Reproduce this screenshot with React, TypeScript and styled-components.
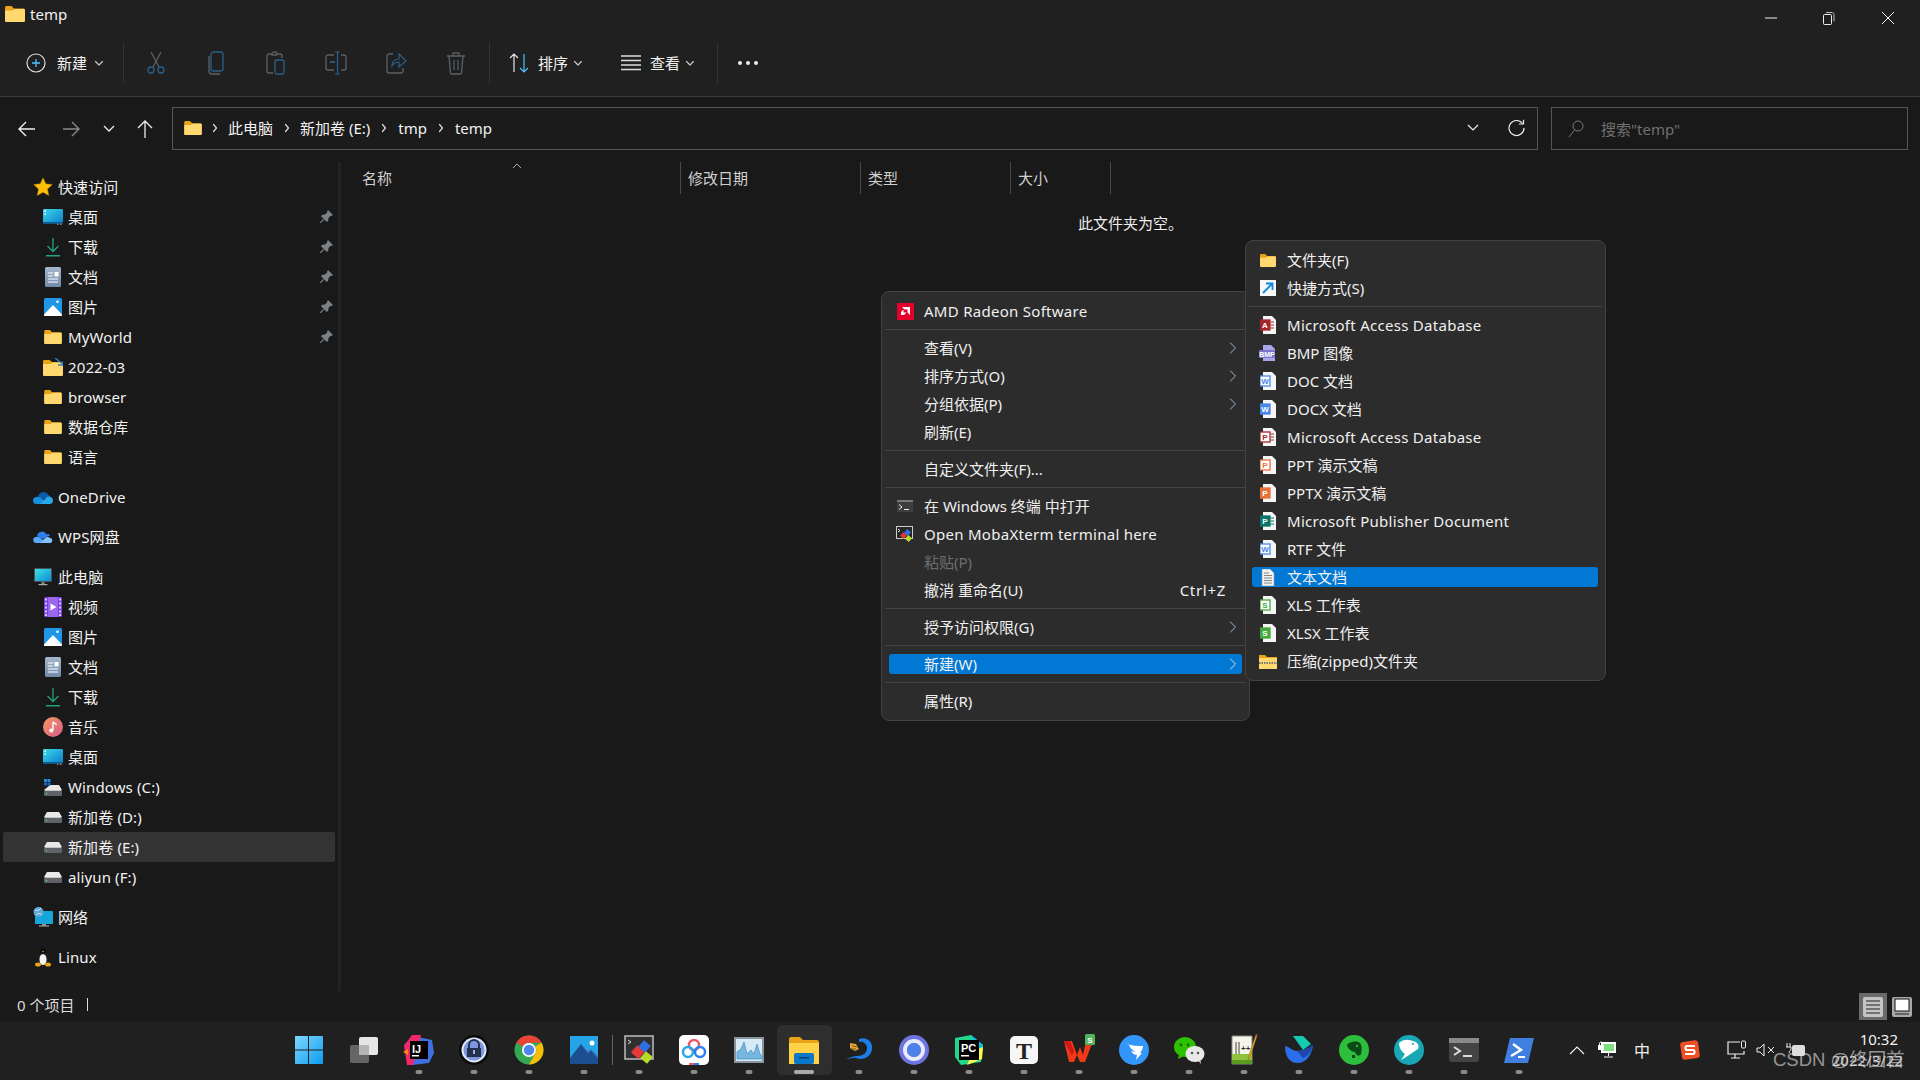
import React from 'react';
import styled, { createGlobalStyle } from 'styled-components';

const Global = createGlobalStyle`
  html, body { margin: 0; padding: 0; background: #191919; overflow: hidden; }
  body { font-family: "Noto Sans", "Noto Sans CJK SC", sans-serif; font-size: 15px; color: #f2f2f2; }
  * { box-sizing: border-box; }
`;

const Page = styled.div`position: relative; width: 1920px; height: 1080px; display: flex; flex-direction: column; overflow: hidden;`;
const TopBar = styled.div`background: #202020; height: 97px; border-bottom: 1px solid #3b3b3b; flex: none;`;
const TitleRow = styled.div`height: 30px; display: flex; align-items: center; padding: 0 3px 2px 5px; gap: 5px; line-height: 20px;`;
const WindowButtons = styled.div`margin-left: auto; display: flex; margin-top: 7px;`;
const WindowButton = styled.div`width: 58.5px; height: 30px; display: flex; align-items: center; justify-content: center;`;
const Toolbar = styled.div`height: 66px; display: flex; align-items: center;`;
const ToolSep = styled.div`width: 1px; height: 40px; background: #343434; flex: none;`;
const ToolText = styled.div<{ $pad: number; $gap: number; $w: number }>`
  display: flex; align-items: center; flex: none; width: ${p => p.$w}px; padding-left: ${p => p.$pad}px; gap: ${p => p.$gap}px; height: 40px;
`;
const ToolLabel = styled.span`width: 31px; white-space: nowrap; line-height: 20px;`;
const ToolIconSlot = styled.div`width: 60px; height: 40px; display: flex; align-items: center; justify-content: center; flex: none;`;
const DisabledGroup = styled.div`display: flex; padding: 0 3px 0 2px;`;
const ToolChevron = styled.div`margin-left: -5px; display: flex;`;

const AddressRow = styled.div`height: 65px; padding: 10px 12px 0 5px; display: flex; flex: none; background: #191919;`;
const NavButton = styled.div<{ $w: number }>`width: ${p => p.$w}px; height: 43px; display: flex; align-items: center; justify-content: center; flex: none;`;
const AddressBox = styled.div`
  margin-left: 7px; width: 1366px; height: 43px; border: 1px solid #565656; background: #1b1b1b; display: flex; align-items: center; padding: 0 0 2px 11px; flex: none;
`;
const Crumb = styled.span<{ $ml: number }>`margin-left: ${p => p.$ml}px; white-space: nowrap; line-height: 20px;`;
const CrumbSep = styled.div<{ $ml: number }>`margin-left: ${p => p.$ml}px; display: flex;`;
const AddressEnd = styled.div`margin-left: auto; display: flex; align-items: center; gap: 29px; padding-right: 12px;`;
const SearchBox = styled.div`
  margin-left: 13px; width: 357px; height: 43px; border: 1px solid #565656; display: flex; align-items: center; padding-left: 16px; gap: 17px; color: #6f6f6f; flex: none;
`;

const Body = styled.div`flex: 1; display: flex; min-height: 0;`;
const Sidebar = styled.div`width: 341px; flex: none; padding: 10px 3px 0 3px; border-right: 3px solid #222; display: flex; flex-direction: column; gap: 10px;`;
const NavGroup = styled.div`display: flex; flex-direction: column;`;
const NavRow = styled.div<{ $child?: boolean; $selected?: boolean }>`
  height: 30px; display: flex; align-items: center; border-radius: 2px; position: relative; padding-left: ${p => (p.$child ? 40 : 30)}px; gap: 5px; line-height: 20px; white-space: nowrap; letter-spacing: .12px;
  background: ${p => (p.$selected ? '#333' : 'transparent')};
`;
const NavIcon = styled.div`width: 20px; height: 20px; display: flex; align-items: center; justify-content: center; flex: none;`;
const PinSlot = styled.div`position: absolute; right: 2px; top: 8px; display: flex;`;

const Main = styled.div`flex: 1; display: flex; flex-direction: column;`;
const HeaderRow = styled.div`display: flex; height: 32px; flex: none;`;
const HeaderCell = styled.div<{ $w: number; $pad: number }>`
  width: ${p => p.$w}px; padding: 0 0 2px ${p => p.$pad}px; border-right: 1px solid #4a4a4a; position: relative; display: flex; align-items: center; color: #d0d0d0; white-space: nowrap;
`;
const SortCaret = styled.div`position: absolute; left: 171px; top: 0; display: flex;`;
const EmptyNote = styled.div`margin-top: 18px; text-align: center; line-height: 22px; color: #eee;`;

const StatusBar = styled.div`height: 31px; flex: none; display: flex; align-items: center; padding: 0 8px 0 17px; background: #1a1a1a; color: #dcdcdc;`;
const StatusInfo = styled.div`display: flex; align-items: center; margin-top: -4px;`;
const StatusCaret = styled.div`width: 1px; height: 13px; margin-left: 13px; background: #ddd;`;
const ViewToggles = styled.div`margin-left: auto; display: flex; align-items: center; gap: 4px;`;
const ViewToggle = styled.div<{ $active?: boolean }>`
  width: ${p => (p.$active ? 28 : 21)}px; height: ${p => (p.$active ? 27 : 21)}px; background: ${p => (p.$active ? '#6a6a6a' : 'transparent')}; display: flex; align-items: center; justify-content: center;
`;

const Taskbar = styled.div`height: 58px; flex: none; background: #202020; display: flex; align-items: center; padding: 0 0 2px 281.5px; position: relative;`;
const TaskItem = styled.div<{ $dot?: boolean; $active?: boolean }>`
  width: 55px; height: 50px; position: relative; display: flex; align-items: center; justify-content: center; flex: none; border-radius: 5px;
  background: ${p => (p.$active ? '#2e2e2e' : 'transparent')};
  &::after {
    content: ''; display: ${p => (p.$dot ? 'block' : 'none')}; position: absolute; left: 50%; bottom: 1px; height: 4px; border-radius: 2px;
    width: ${p => (p.$active ? 20 : 7)}px; transform: translateX(-50%); background: ${p => (p.$active ? '#aaa' : '#8a8a8a')};
  }
`;
const TaskDivider = styled.div`width: 1px; height: 30px; margin-right: -1px; background: #666; flex: none;`;
const TraySpacer = styled.div`width: 15.5px; flex: none;`;
const TrayItem = styled.div<{ $w: number }>`width: ${p => p.$w}px; flex: none; display: flex; align-items: center; justify-content: center; color: #f0f0f0; font-size: 16px;`;
const Clock = styled.div`flex: 1; display: flex; flex-direction: column; align-items: flex-end; padding-right: 17px; line-height: 20px; font-size: 15px; margin-top: -2px;`;
const ClockTime = styled.span`margin-right: 5px; margin-bottom: 1px;`;
const ClockDate = styled.span`color: #c8c8c8;`;
const Watermark = styled.div`
  position: absolute; left: 1773px; top: 1047px; font-family: "Liberation Sans", "Noto Sans CJK SC", sans-serif; font-size: 18.5px; line-height: 26px; color: rgba(225,225,225,.62); white-space: nowrap;
`;

const Menu = styled.div<{ $x: number; $y: number; $w: number; $pt: number; $pb: number; $pl: number; $z: number }>`
  position: absolute; left: ${p => p.$x}px; top: ${p => p.$y}px; width: ${p => p.$w}px; z-index: ${p => p.$z};
  display: flex; flex-direction: column;
  padding: ${p => p.$pt}px 7px ${p => p.$pb}px ${p => p.$pl}px;
  background: #2c2c2c; border: 1px solid #424242; border-radius: 8px;
`;
const MenuRow = styled.div<{ $active?: boolean; $disabled?: boolean }>`
  height: 20px; margin: 4px 0; display: flex; align-items: center; padding-left: 7px; line-height: 20px; white-space: nowrap; border-radius: 3px; flex: none;
  background: ${p => (p.$active ? '#0078d4' : 'transparent')};
  color: ${p => (p.$disabled ? '#6d6d6d' : '#f0f0f0')};
`;
const MenuIcon = styled.div`width: 18px; height: 18px; flex: none; margin-right: 10px; display: flex; align-items: center; justify-content: center;`;
const MenuLatin = styled.span`letter-spacing: .28px;`;
const MenuShortcut = styled.span`margin-left: auto; padding-right: 16px; letter-spacing: .7px;`;
const MenuArrow = styled.div`margin-left: auto; padding-right: 5px; display: flex;`;
const MenuSep = styled.div`height: 1px; margin: 4px -4px; background: #454545; flex: none;`;

const S = { fill: 'none', strokeLinecap: 'round' as const, strokeLinejoin: 'round' as const };

const Chevron = ({ size = 10, color = '#cfcfcf' }: { size?: number; color?: string }) => (
  <svg width={size} height={size} viewBox="0 0 10 10"><path d="M1.5 3.5 5 7l3.5-3.5" stroke={color} strokeWidth="1.1" {...S} /></svg>
);
const RightArrow = ({ color = '#dcdcdc' }: { color?: string }) => (
  <svg width="8" height="12" viewBox="0 0 8 12"><path d="M1.5 1 6.5 6l-5 5" stroke={color} strokeWidth="1" {...S} /></svg>
);
const CrumbArrow = () => <svg width="6" height="10" viewBox="0 0 6 10"><path d="M1.5 1.5 4.5 5l-3 3.5" stroke="#dedede" strokeWidth="1.2" {...S} /></svg>;

const Folder = ({ w = 20, h = 16 }: { w?: number; h?: number }) => (
  <svg width={w} height={h} viewBox="0 0 20 16">
    <path d="M0 1.5C0 .7.7 0 1.500 0h5L9 2.500h9.500c.8 0 1.500.7 1.500 1.500v10.500c0 .8-.7 1.500-1.500 1.500h-17C.7 16 0 15.300 0 14.500z" fill="#e9a317" />
    <path d="M0 4.500h7.500L9.500 3h9c.8 0 1.500.7 1.500 1.500v10c0 .8-.7 1.500-1.500 1.500h-17C.7 16 0 15.300 0 14.500z" fill="#ffd970" />
  </svg>
);
const FolderLink = () => (
  <svg width="20" height="18" viewBox="0 0 20 18">
    <path d="M0 3.500C0 2.700.7 2 1.500 2h5L9 4h9c1 0 2 1 2 2v10.500c0 .8-.7 1.500-1.500 1.500h-17C.7 18 0 17.300 0 16.500z" fill="#e9a317" />
    <path d="M0 6h7.500l2-1.500h9c.8 0 1.500.7 1.500 1.500v10.500c0 .8-.7 1.500-1.500 1.500h-17C.7 18 0 17.300 0 16.500z" fill="#ffd970" />
    <path d="M12 0l7 5.500" stroke="#2a80c4" strokeWidth="1.500" /><path d="M15 7h5V3" stroke="#2a80c4" strokeWidth="1.500" fill="none" />
  </svg>
);
const Star = () => <svg width="20" height="20" viewBox="0 0 20 20"><path d="M10 .8l2.800 6 6.500.8-4.800 4.500 1.300 6.500L10 15.300l-5.800 3.300 1.300-6.500L.7 7.600l6.500-.8z" fill="#ffc107" stroke="#b57e00" strokeWidth=".5" /></svg>;
const DesktopIco = () => (
  <svg width="20" height="16" viewBox="0 0 20 16">
    <defs><linearGradient id="dk" x1="0" y1="0" x2="1" y2="1"><stop offset="0" stopColor="#3fd6ee" /><stop offset="1" stopColor="#0a7fc7" /></linearGradient></defs>
    <rect width="20" height="14.500" rx="1" fill="url(#dk)" /><rect x="1.500" y="1.500" width="1.500" height="1.500" fill="#fff" /><rect x="1.500" y="4.500" width="1.500" height="1.500" fill="#dff" />
    <rect y="13" width="20" height="1.500" fill="#0b5a90" /><rect x="14" y="14.500" width="1.500" height="1.500" fill="#888" /><rect x="17" y="14.500" width="1.500" height="1.500" fill="#888" />
  </svg>
);
const DownloadIco = () => <svg width="16" height="19" viewBox="0 0 16 19"><path d="M8 0v13M2.500 8 8 13.500 13.500 8" stroke="#25a07f" strokeWidth="1.300" fill="none" /><rect x="1" y="17" width="14" height="1.500" fill="#25a07f" /></svg>;
const DocsIco = () => (
  <svg width="16" height="20" viewBox="0 0 16 20">
    <defs><linearGradient id="dc" x1="0" y1="0" x2="0" y2="1"><stop offset="0" stopColor="#a5b8cf" /><stop offset="1" stopColor="#6f8aa9" /></linearGradient></defs>
    <rect width="16" height="20" rx="1.500" fill="url(#dc)" /><path d="M3 6h5M3 9h5M3 12h10M3 15h10" stroke="#fff" strokeWidth="1.100" /><rect x="9.500" y="5" width="4" height="4.500" fill="#fff" />
  </svg>
);
const PictureIco = () => (
  <svg width="18" height="18" viewBox="0 0 18 18">
    <rect width="18" height="18" rx="1.500" fill="#1f96e8" /><path d="M0 16.500 9 7l9 9.500V18H0z" fill="#fff" /><circle cx="13.500" cy="3.800" r="1.300" fill="#fff" />
  </svg>
);
const OneDrive = () => (
  <svg width="20" height="14" viewBox="0 0 20 14">
    <path d="M5 7a5.500 5.500 0 0 1 10-2.500 4 4 0 0 1 2.500 3L9 9.500z" fill="#0a5cb0" /><path d="M3.500 14a3.500 3.500 0 0 1 0-7H5c1 0 2 .4 3 1l4 3-3 3z" fill="#1490df" /><path d="M7 14l7-7c2-1.500 6 0 6 3.500 0 2-1.500 3.500-3 3.500z" fill="#28a8ea" />
  </svg>
);
const WpsCloud = () => (
  <svg width="20" height="14" viewBox="0 0 20 14">
    <path d="M4 6a5 5 0 0 1 9.500-1.500C15 3.500 16.500 4 17 5.500L9 9z" fill="#2f7df0" /><path d="M3.500 13a3 3 0 0 1-.5-6c1.500-.5 3 0 4 1l3 2-2 3z" fill="#58a8ff" /><path d="M7 13l5-5c2-1.500 4-1 5 0 3 0 3 5 0 5z" fill="#7fc3ff" />
  </svg>
);
const PcIco = () => (
  <svg width="18" height="18" viewBox="0 0 18 18">
    <defs><linearGradient id="pc" x1="0" y1="0" x2="1" y2="1"><stop offset="0" stopColor="#3fe0e0" /><stop offset="1" stopColor="#0b8ed8" /></linearGradient></defs>
    <rect width="18" height="14" rx="1" fill="#4a4f55" /><rect x="1" y="1" width="16" height="12" fill="url(#pc)" /><rect x="7.500" y="14" width="3" height="2" fill="#888" /><rect x="4.500" y="16" width="9" height="1.200" fill="#aaa" />
  </svg>
);
const VideoIco = () => (
  <svg width="18" height="20" viewBox="0 0 18 20">
    <rect width="18" height="20" rx="1.500" fill="#7b3fe4" /><rect x="4" width="10" height="20" fill="#9a68ee" />
    {[1.500, 5.500, 9.500, 13.500, 17].map(y => <React.Fragment key={y}><rect x="1" y={y} width="2" height="2" fill="#d9c8fa" /><rect x="15" y={y} width="2" height="2" fill="#d9c8fa" /></React.Fragment>)}
    <path d="M6.500 6.500 12.500 10l-6 3.500z" fill="#fff" />
  </svg>
);
const MusicIco = () => (
  <svg width="20" height="20" viewBox="0 0 20 20">
    <defs><linearGradient id="mu" x1="0" y1="0" x2="1" y2="1"><stop offset="0" stopColor="#f39a5e" /><stop offset="1" stopColor="#d85a8c" /></linearGradient></defs>
    <circle cx="10" cy="10" r="10" fill="url(#mu)" /><path d="M10 5v8" stroke="#fff" strokeWidth="1.400" /><path d="M10 5c1 1.500 3 1.500 3.500 3" stroke="#fff" strokeWidth="1.400" fill="none" /><circle cx="8.300" cy="13.500" r="2" fill="#fff" />
  </svg>
);
const DriveIco = () => (
  <svg width="18" height="11" viewBox="0 0 18 11">
    <path d="M3 0h12l3 5H0z" fill="#e8e8e8" /><rect y="5" width="18" height="6" rx="1" fill="#5f6266" /><rect x="1" y="5" width="16" height="1" fill="#c4c4c4" /><rect x="2" y="8" width="1.200" height="1.200" fill="#4fe06a" />
  </svg>
);
const WinDrive = () => (
  <svg width="18" height="17" viewBox="0 0 18 17">
    <path d="M6 6h9l3 5H0z" fill="#e8e8e8" /><rect y="11" width="18" height="6" rx="1" fill="#5f6266" /><rect x="1" y="11" width="16" height="1" fill="#c4c4c4" /><rect x="2" y="14" width="1.200" height="1.200" fill="#4fe06a" />
    <rect width="3" height="3" fill="#1e8be0" /><rect x="3.500" width="3" height="3" fill="#1e8be0" /><rect y="3.500" width="3" height="3" fill="#1466b8" /><rect x="3.500" y="3.500" width="3" height="3" fill="#1466b8" />
  </svg>
);
const NetIco = () => (
  <svg width="20" height="20" viewBox="0 0 20 20">
    <rect x="2" y="4" width="18" height="13" rx="1" fill="#18a5dc" /><rect x="9" y="17" width="4" height="1.500" fill="#999" /><rect x="6" y="18.500" width="10" height="1" fill="#bbb" />
    <circle cx="5.500" cy="5" r="5" fill="#5da8d8" /><path d="M2 3c2 1 5 0 6-2M3 8c2-2 4-2 6 0" stroke="#e3f2fa" fill="none" />
  </svg>
);
const Penguin = () => (
  <svg width="16" height="20" viewBox="0 0 16 20">
    <ellipse cx="8" cy="11" rx="5" ry="7" fill="#222" /><ellipse cx="8" cy="4" rx="3" ry="4" fill="#111" /><ellipse cx="8" cy="12.500" rx="3.500" ry="5.500" fill="#f5f5f5" />
    <path d="M7 4h2l-1 1.500z" fill="#f0a81c" /><ellipse cx="3" cy="17.500" rx="3" ry="2" fill="#e7a51a" /><ellipse cx="13" cy="17.500" rx="3" ry="2" fill="#e7a51a" />
  </svg>
);
const Pin = () => (
  <svg width="13" height="13" viewBox="0 0 13 13">
    <path d="M8 0l5 5-1.500 1-.8-.3L8.500 8l-.3 2.700L6.800 12 1 6.200 2.300 4.800 5 4.500l2.300-2.200L7 1.500z" fill="#7a8187" /><path d="M3.500 9.500 0 13" stroke="#7a8187" strokeWidth="1.200" />
  </svg>
);

const Doc = ({ color, letter, solid, extra }: { color: string; letter: string; solid?: boolean; extra?: boolean }) => (
  <svg width="16" height="18" viewBox="0 0 16 18">
    <path d="M3 0h9l4 4v14H3z" fill="#f5f5f5" />
    {extra && <path d="M11 6h3M11 9h3M11 12h3" stroke={color} strokeWidth="1" />}
    <rect x="0" y="4" width="10" height="10" fill={solid ? color : '#fff'} stroke={color} strokeWidth="1.300" />
    <text x="5" y="12" textAnchor="middle" fontSize="8" fontWeight="700" fontFamily="Liberation Sans, sans-serif" fill={solid ? '#fff' : color}>{letter}</text>
  </svg>
);
const BmpIco = () => (
  <svg width="18" height="18" viewBox="0 0 18 18">
    <path d="M4 1h8l4 4v12H4z" fill="#a9a6e8" /><rect y="6" width="16" height="8" rx="1" fill="#7a74cf" />
    <text x="8" y="13" textAnchor="middle" fontSize="7" fontWeight="700" fontFamily="Liberation Sans, sans-serif" fill="#fff">BMP</text>
  </svg>
);
const TextDoc = () => (
  <svg width="14" height="17" viewBox="0 0 14 17">
    <path d="M1 0h8l4 4v13H1z" fill="#f2f2f2" stroke="#9a9a9a" strokeWidth=".6" /><path d="M3 4h5M3 6.500h8M3 9h8M3 11.500h8M3 14h8" stroke="#777" strokeWidth=".9" />
  </svg>
);
const ZipFolder = () => (
  <svg width="18" height="15" viewBox="0 0 18 15">
    <path d="M0 1h6l2 2h10v11H0z" fill="#e9a317" /><path d="M0 4h18v11H0z" fill="#ffd970" /><path d="M0 9h18" stroke="#777" strokeWidth="2" strokeDasharray="1.500 1" />
  </svg>
);
const ShortcutIco = () => (
  <svg width="16" height="16" viewBox="0 0 16 16"><rect width="16" height="16" fill="#f7f7f7" /><path d="M3 13 12 4M6 3.500h6.500V10" stroke="#0d8ae0" strokeWidth="1.800" fill="none" /></svg>
);
const AmdIco = () => (
  <svg width="17" height="17" viewBox="0 0 17 17"><rect width="17" height="17" fill="#e3002b" /><path d="M5 4h8v8l-2.500-2.500V6.500H7.500zM4 9l2.500-2.500v3h3L7 12H4z" fill="#fff" /></svg>
);
const TermSmall = () => (
  <svg width="16" height="12" viewBox="0 0 16 12"><rect width="16" height="12" fill="#3e3e3e" /><rect width="16" height="2" fill="#7a7a7a" /><path d="M2 4.500 5 7 2 9.500" stroke="#eee" fill="none" /><path d="M7 9.500h5" stroke="#eee" /></svg>
);
const MobaSmall = () => (
  <svg width="18" height="17" viewBox="0 0 18 17">
    <rect x=".5" y=".5" width="16" height="12" fill="#262626" stroke="#ccc" /><path d="M2 3l2 1.500L2 6" stroke="#ddd" fill="none" />
    <rect x="5" y="7" width="5" height="5" fill="#e03434" transform="rotate(40 7.500 9.500)" /><rect x="9" y="4" width="5" height="5" fill="#2f6fe0" transform="rotate(40 11.500 6.500)" /><rect x="10" y="10" width="5" height="5" fill="#b4dc28" transform="rotate(40 12.500 12.500)" />
  </svg>
);

const ToolSvg = ({ children }: { children: React.ReactNode }) => <svg width="22" height="24" viewBox="0 0 22 24">{children}</svg>;
const G = '#5a6066'; const B = '#2a5f88';
const disabledIcons = [
  <ToolSvg><path d="M6 1l8 15M16 1 8 16" stroke={G} strokeWidth="1.300" /><circle cx="6" cy="19" r="3" fill="none" stroke={B} strokeWidth="1.300" /><circle cx="16" cy="19" r="3" fill="none" stroke={B} strokeWidth="1.300" /></ToolSvg>,
  <ToolSvg><rect x="6" y="1" width="12" height="19" rx="2.500" fill="none" stroke={B} strokeWidth="1.300" /><path d="M4 5v15c0 2 1.500 3 3 3h8" fill="none" stroke={G} strokeWidth="1.300" /></ToolSvg>,
  <ToolSvg><path d="M7 3H4c-1 0-2 1-2 2v15c0 1 1 2 2 2h4" fill="none" stroke={G} strokeWidth="1.300" /><path d="M7 3c0-1 1-2 2-2h1c1 0 2 1 2 2v1H7zM12 3h3c1 0 2 1 2 2v2" fill="none" stroke={G} strokeWidth="1.300" /><rect x="10" y="9" width="9" height="14" rx="1.500" fill="none" stroke={B} strokeWidth="1.300" /></ToolSvg>,
  <ToolSvg><path d="M9 4H3C2 4 1 5 1 6v11c0 1 1 2 2 2h6M16 4h3c1 0 2 1 2 2v11c0 1-1 2-2 2h-3" fill="none" stroke={G} strokeWidth="1.300" /><path d="M5 11h5" stroke={B} strokeWidth="1.800" /><path d="M12.500 1v22M10 1h5M10 23h5" stroke={B} strokeWidth="1.200" fill="none" /></ToolSvg>,
  <ToolSvg><path d="M8 3H4C3 3 2 4 2 5v15c0 1 1 2 2 2h12c1 0 2-1 2-2v-3" fill="none" stroke={G} strokeWidth="1.300" /><path d="M7 15c0-5 3-7 7-7V3l7 7-7 6v-5c-3 0-5 1-7 4z" fill="none" stroke={B} strokeWidth="1.200" /></ToolSvg>,
  <ToolSvg><path d="M2 5h18M8 5V2h6v3M4 5l1.500 17c0 .6.5 1 1 1h9c.5 0 1-.4 1-1L18 5" fill="none" stroke={G} strokeWidth="1.300" /><path d="M9 9v10M13 9v10" stroke={G} strokeWidth="1.200" /></ToolSvg>,
];

const t = (children: React.ReactNode) => <svg width="32" height="32" viewBox="0 0 32 32">{children}</svg>;
const TB = {
  start: t(<>
    <defs><linearGradient id="w" x1="0" y1="0" x2="1" y2="1"><stop offset="0" stopColor="#7fd8ff" /><stop offset="1" stopColor="#0d9bf0" /></linearGradient></defs>
    <path d="M2 3c0-.6.4-1 1-1h12v13.500H2zM16 2h13c.6 0 1 .4 1 1v12.500H16zM2 16.500h13V30H3c-.6 0-1-.4-1-1zM16 16.500h14V29c0 .6-.4 1-1 1H16z" fill="url(#w)" /></>),
  view: t(<><rect x="11" y="3" width="19" height="18" rx="2" fill="#e6e6e6" /><rect x="2" y="11" width="19" height="18" rx="2" fill="#6e6e6e" fillOpacity=".88" /><rect x="11" y="11" width="10" height="10" fill="#b5b5b5" /></>),
  ij: t(<><path d="M1 11 10 2l19 4 2 13-5 10-17 2z" fill="#3f6fe0" /><path d="M1 12 9 1h9L10 31H4z" fill="#f0286a" /><path d="M0 18 5 15v6z" fill="#ff8a1a" /><rect x="7" y="7" width="18" height="18" fill="#000" /><text x="9" y="19" fontFamily="Liberation Sans, sans-serif" fontWeight="700" fontSize="11" fill="#fff">IJ</text><rect x="9" y="21" width="7" height="1.500" fill="#fff" /></>),
  keepass: t(<><circle cx="16" cy="16" r="15" fill="#0a0a0a" /><circle cx="16" cy="16" r="12.500" fill="#dfe7fb" /><circle cx="16" cy="16" r="10.500" fill="#7d96dd" /><path d="M11 14v-3a5 5 0 0 1 10 0v3" stroke="#24304e" strokeWidth="2" fill="none" /><rect x="9" y="14" width="14" height="9" fill="#24304e" /><rect x="15" y="16" width="2" height="4" fill="#9fb2e6" /></>),
  chrome: t(<><circle cx="16" cy="16" r="14.500" fill="#34a853" /><path d="M16 1.500a14.500 14.500 0 0 1 12.600 7.300H16a7.200 7.200 0 0 0-6.300 3.600L3.400 8.800A14.500 14.500 0 0 1 16 1.500z" fill="#ea4335" /><path d="M28.600 8.800A14.500 14.500 0 0 1 16 30.500l6.300-11a7.200 7.200 0 0 0 0-7.100z" fill="#fbbc04" /><circle cx="16" cy="16" r="7" fill="#fff" /><circle cx="16" cy="16" r="5.300" fill="#4f86ec" /></>),
  photos: t(<><rect x="2" y="2" width="28" height="28" fill="#26a4e8" /><path d="M2 24 13 10l7 9 3-3 7 8v6H2z" fill="#1b4f92" /><path d="M13 10l7 9 3-3 7 8v-2l-7-7-3 2z" fill="#4a76c2" /><circle cx="24" cy="9" r="2.500" fill="#fff" /></>),
  moba: t(<><rect x="2" y="2" width="28" height="23" fill="#2f2f2f" stroke="#bdbdbd" strokeWidth="1.500" /><path d="M5 6l3 2-3 2" stroke="#ddd" fill="none" /><rect x="10" y="13" width="10" height="10" fill="#e63a3a" transform="rotate(40 15 18)" /><rect x="17" y="8" width="9" height="9" fill="#2f6fe0" transform="rotate(40 21.500 12.500)" /><rect x="19" y="19" width="9" height="9" fill="#b4dc28" transform="rotate(40 23.500 23.500)" /></>),
  baidu: t(<><rect x="1" y="1" width="30" height="30" rx="5" fill="#fff" /><circle cx="16" cy="11" r="5" fill="none" stroke="#e85a6a" strokeWidth="2.500" /><circle cx="10" cy="18" r="5" fill="none" stroke="#28a8ea" strokeWidth="2.500" /><circle cx="22" cy="18" r="5" fill="none" stroke="#2b7ff0" strokeWidth="2.500" /><rect x="11" y="29" width="5" height="2" fill="#e85a6a" /><rect x="16" y="29" width="5" height="2" fill="#2b7ff0" /></>),
  perf: t(<><rect x="2" y="4" width="28" height="24" fill="#d8eaf6" stroke="#8a949c" strokeWidth="2" /><path d="M4 25V18l4-3 3-7 3 12 4-4 3 4 3-10 3 10 2 2v3z" fill="#78b7e0" stroke="#3b8fc8" strokeWidth=".7" /></>),
  explorer: t(<><path d="M1 5c0-1 .8-2 2-2h9l3 3h14c1 0 2 1 2 2v22H1z" fill="#e9a317" /><path d="M1 9h30v21H1z" fill="#ffd24a" /><rect x="6" y="19" width="20" height="11" rx="2" fill="#0a78c8" /><rect x="11" y="23" width="10" height="1.500" fill="#073e6e" /></>),
  bird: t(<><path d="M16 5c8-3 14 3 13 10-1 8-9 12-16 9-3-1-7 1-10 1 3-1 7-3 11-3 6 0 10-3 10-8 0-4-4-7-8-6z" fill="#1a7de8" /><path d="M7 9l6 1 3 5-4 2-5-3z" fill="#e0a63a" /><path d="M9 12l6 1M8 15l5 0" stroke="#8a5c16" /></>),
  circle: t(<><circle cx="16" cy="16" r="15" fill="#6d74df" /><circle cx="16" cy="16" r="9" fill="none" stroke="#e8ebff" strokeWidth="4" /><circle cx="16" cy="16" r="7" fill="#4f7fe8" /></>),
  pycharm: t(<><path d="M2 4 18 1l12 10-2 17-20 3-6-8z" fill="#21d789" /><path d="M18 1l12 10-6 8z" fill="#07c3f2" /><path d="M14 31l15-6 1-12-10 4z" fill="#fcf84a" /><rect x="6" y="6" width="20" height="20" fill="#000" /><text x="8" y="18" fontFamily="Liberation Sans, sans-serif" fontWeight="700" fontSize="11" fill="#fff">PC</text><rect x="8" y="21" width="8" height="1.500" fill="#fff" /></>),
  typora: t(<><rect x="2" y="2" width="28" height="28" rx="5" fill="#f6f6f6" /><text x="16" y="25" textAnchor="middle" fontFamily="Liberation Serif, serif" fontWeight="700" fontSize="24" fill="#222">T</text></>),
  wps: t(<><path d="M1 7h8l5 14 3-8 3 8 3-14h7l-8 21h-5l-3-7-3 7h-5z" fill="#f03a17" /><path d="M1 7h6l4 10-2 5z" fill="#d31616" /><rect x="22" y="0" width="10" height="11" rx="1.500" fill="#53b55a" /><text x="27" y="9" textAnchor="middle" fontFamily="Liberation Sans, sans-serif" fontWeight="700" fontSize="8" fill="#fff">S</text></>),
  ding: t(<><circle cx="16" cy="16" r="15" fill="#3296fa" /><path d="M7 9c6 3 13 3 18 3 0 2-1 5-3 7h2l-6 7 1-5c-2 0-4-1-6-4 1 0 3 1 5 1-3-1-6-4-7-7z" fill="#fff" /></>),
  wechat: t(<><ellipse cx="12" cy="13" rx="11" ry="10" fill="#2dc100" /><path d="M6 20l-1 5 6-3z" fill="#2dc100" /><circle cx="8" cy="11" r="1.400" fill="#176600" /><circle cx="15" cy="11" r="1.400" fill="#176600" /><ellipse cx="22" cy="20" rx="9.500" ry="8" fill="#e8e8e8" /><path d="M25 26l3 4-1-6z" fill="#e8e8e8" /><circle cx="19" cy="19" r="1.300" fill="#555" /><circle cx="25" cy="19" r="1.300" fill="#555" /></>),
  npp: t(<><path d="M4 2h20v28H4z" fill="#f4f4ea" stroke="#8a8a80" /><path d="M4 20h20v10H4z" fill="#8fc33a" /><path d="M4 26h20v4H4z" fill="#5b9a20" /><text x="13" y="17" fontFamily="Liberation Sans, sans-serif" fontWeight="700" fontSize="8" fill="#333">++</text><path d="M8 8v12M11 8v12" stroke="#444" /><path d="M29 2 22 23l-2 3 .5-4 7-20z" fill="#f0b429" stroke="#8a5c16" strokeWidth=".5" /><path d="M29 2l-2-.5 1-1.500 2 .8z" fill="#b44" /></>),
  feather: t(<><path d="M10 2h10l8 8-8 6z" fill="#14cbb2" /><path d="M2 12c5 1 8 5 12 5 6 0 11-3 16-6-1 10-7 18-15 18-8 0-13-6-13-17z" fill="#2a6fe8" /><path d="M14 17c6 0 11-3 16-6-1 6-5 11-10 13z" fill="#1d47a8" /></>),
  evernote: t(<><circle cx="16" cy="16" r="15" fill="#2dbe3e" /><path d="M9 11c2-3 9-5 13-2 2 2 2 8 1 11-1 2-4 2-5 0l-1-2c-3 0-7-3-8-7z" fill="#0a4a15" /><circle cx="19" cy="12" r="1.200" fill="#2dbe3e" /><rect x="14" y="21" width="3" height="3" fill="#0a4a15" /></>),
  frog: t(<><circle cx="16" cy="16" r="15" fill="#18a7b5" /><path d="M6 9c5-5 11-3 14-2 4 1 7 4 5 8l-6 4c-3 2-7 5-11 7l4-6c-3-2-6-6-6-11z" fill="#fff" /><circle cx="20" cy="10" r="1" fill="#18a7b5" /></>),
  term: t(<><rect x="1" y="4" width="30" height="24" rx="3" fill="#444" /><rect x="1" y="4" width="30" height="5" fill="#8a8a8a" /><path d="M6 13l6 4-6 4" stroke="#ddd" strokeWidth="2" fill="none" /><path d="M15 22h9" stroke="#ddd" strokeWidth="2" /></>),
  ps: t(<><path d="M7 4h24l-6 25H1z" fill="#3f7fe0" /><path d="M10 10l8 6-10 6" stroke="#fff" strokeWidth="2.500" fill="none" /><path d="M15 23h7" stroke="#fff" strokeWidth="2" /></>),
};

const sideQuick: [string, React.ReactNode, boolean][] = [
  ['桌面', <DesktopIco />, true], ['下载', <DownloadIco />, true], ['文档', <DocsIco />, true], ['图片', <PictureIco />, true], ['MyWorld', <Folder w={18} h={14} />, true],
  ['2022-03', <FolderLink />, false], ['browser', <Folder w={18} h={14} />, false], ['数据仓库', <Folder w={18} h={14} />, false], ['语言', <Folder w={18} h={14} />, false],
];
const sidePc: [string, React.ReactNode, boolean?][] = [
  ['视频', <VideoIco />], ['图片', <PictureIco />], ['文档', <DocsIco />], ['下载', <DownloadIco />], ['音乐', <MusicIco />], ['桌面', <DesktopIco />],
  ['Windows (C:)', <WinDrive />], ['新加卷 (D:)', <DriveIco />], ['新加卷 (E:)', <DriveIco />, true], ['aliyun (F:)', <DriveIco />],
];
const subRows: [React.ReactNode, React.ReactNode, boolean?][] = [
  [<MenuLatin>Microsoft Access Database</MenuLatin>, <Doc color="#a4262c" letter="A" solid extra />],
  ['BMP 图像', <BmpIco />],
  ['DOC 文档', <Doc color="#4a86e8" letter="W" />],
  ['DOCX 文档', <Doc color="#4a86e8" letter="W" solid />],
  [<MenuLatin>Microsoft Access Database</MenuLatin>, <Doc color="#a4262c" letter="P" extra />],
  ['PPT 演示文稿', <Doc color="#e8703a" letter="P" />],
  ['PPTX 演示文稿', <Doc color="#e8703a" letter="P" solid />],
  [<MenuLatin>Microsoft Publisher Document</MenuLatin>, <Doc color="#077568" letter="P" solid extra />],
  ['RTF 文件', <Doc color="#4a86e8" letter="W" />],
  ['文本文档', <TextDoc />, true],
  ['XLS 工作表', <Doc color="#45a83e" letter="S" />],
  ['XLSX 工作表', <Doc color="#45a83e" letter="S" solid />],
  ['压缩(zipped)文件夹', <ZipFolder />],
];

export default function App() {
  return (
    <Page>
      <Global />
      <TopBar>
        <TitleRow>
          <Folder />
          <span>temp</span>
          <WindowButtons>
            <WindowButton><svg width="12" height="12" viewBox="0 0 12 12"><path d="M0 6h12" stroke="#eee" /></svg></WindowButton>
            <WindowButton><svg width="12" height="14" viewBox="0 0 12 14"><rect x=".5" y="3.500" width="8" height="10" rx="1" fill="none" stroke="#eee" /><path d="M3 1.500h6c1 0 2 1 2 2v7" fill="none" stroke="#bbb" /></svg></WindowButton>
            <WindowButton><svg width="14" height="14" viewBox="0 0 14 14"><path d="M1 1l12 12M13 1 1 13" stroke="#eee" /></svg></WindowButton>
          </WindowButtons>
        </TitleRow>
        <Toolbar>
          <ToolText $pad={26} $gap={11} $w={123}>
            <svg width="20" height="22" viewBox="0 0 20 22"><circle cx="10" cy="11" r="9" fill="none" stroke="#ddd" strokeWidth="1.200" /><path d="M10 7v8M6 11h8" stroke="#4cc2ff" strokeWidth="1.300" /></svg>
            <ToolLabel>新建</ToolLabel>
            <ToolChevron><Chevron /></ToolChevron>
          </ToolText>
          <ToolSep />
          <DisabledGroup>{disabledIcons.map((ic, i) => <ToolIconSlot key={i}>{ic}</ToolIconSlot>)}</DisabledGroup>
          <ToolSep />
          <ToolText $pad={19} $gap={9} $w={131}>
            <svg width="20" height="22" viewBox="0 0 20 22"><path d="M5 20V2M1 6l4-4 4 4" fill="none" stroke="#e6e6e6" strokeWidth="1.200" /><path d="M15 2v18M11 16l4 4 4-4" fill="none" stroke="#4cc2ff" strokeWidth="1.200" /></svg>
            <ToolLabel>排序</ToolLabel>
            <ToolChevron><Chevron /></ToolChevron>
          </ToolText>
          <ToolText $pad={0} $gap={9} $w={96}>
            <svg width="20" height="16" viewBox="0 0 20 16"><path d="M0 1h20M0 5.500h20M0 10h20M0 14.500h20" stroke="#ddd" strokeWidth="1.300" /></svg>
            <ToolLabel>查看</ToolLabel>
            <ToolChevron><Chevron /></ToolChevron>
          </ToolText>
          <ToolSep />
          <ToolIconSlot>
            <svg width="22" height="6" viewBox="0 0 22 6"><circle cx="3" cy="3" r="2" fill="#eee" /><circle cx="11" cy="3" r="2" fill="#eee" /><circle cx="19" cy="3" r="2" fill="#eee" /></svg>
          </ToolIconSlot>
        </Toolbar>
      </TopBar>

      <AddressRow>
        <NavButton $w={44}><svg width="18" height="18" viewBox="0 0 18 18"><path d="M17 9H1M8 2 1 9l7 7" fill="none" stroke="#eee" strokeWidth="1.400" /></svg></NavButton>
        <NavButton $w={44}><svg width="18" height="18" viewBox="0 0 18 18"><path d="M1 9h16M10 2l7 7-7 7" fill="none" stroke="#8a8a8a" strokeWidth="1.400" /></svg></NavButton>
        <NavButton $w={32}><svg width="12" height="10" viewBox="0 0 12 10"><path d="M1 2l5 5 5-5" fill="none" stroke="#eee" strokeWidth="1.300" /></svg></NavButton>
        <NavButton $w={40}><svg width="16" height="20" viewBox="0 0 16 20"><path d="M8 19V2M1 9l7-7 7 7" fill="none" stroke="#eee" strokeWidth="1.300" /></svg></NavButton>
        <AddressBox>
          <Folder w={18} h={14} />
          <CrumbSep $ml={10}><CrumbArrow /></CrumbSep>
          <Crumb $ml={10}>此电脑</Crumb>
          <CrumbSep $ml={11}><CrumbArrow /></CrumbSep>
          <Crumb $ml={10}>新加卷 (E:)</Crumb>
          <CrumbSep $ml={11}><CrumbArrow /></CrumbSep>
          <Crumb $ml={11}>tmp</Crumb>
          <CrumbSep $ml={11}><CrumbArrow /></CrumbSep>
          <Crumb $ml={11}>temp</Crumb>
          <AddressEnd>
            <svg width="12" height="10" viewBox="0 0 12 10"><path d="M1 2l5 5 5-5" fill="none" stroke="#eee" strokeWidth="1.200" /></svg>
            <svg width="17" height="18" viewBox="0 0 17 18"><path d="M14.500 4.500A7.500 7.500 0 1 0 16 9" fill="none" stroke="#eee" strokeWidth="1.200" /><path d="M11 5h4.500V.8" fill="none" stroke="#eee" strokeWidth="1.200" /></svg>
          </AddressEnd>
        </AddressBox>
        <SearchBox>
          <svg width="16" height="18" viewBox="0 0 16 18"><circle cx="10" cy="6" r="5" fill="none" stroke="#777" /><path d="M6.500 10 1 17" stroke="#777" /></svg>
          <span>搜索"temp"</span>
        </SearchBox>
      </AddressRow>

      <Body>
        <Sidebar>
          <NavGroup>
            <NavRow><NavIcon><Star /></NavIcon>快速访问</NavRow>
            {sideQuick.map(([label, ic, pin]) => (
              <NavRow $child key={label}><NavIcon>{ic}</NavIcon>{label}{pin && <PinSlot><Pin /></PinSlot>}</NavRow>
            ))}
          </NavGroup>
          <NavRow><NavIcon><OneDrive /></NavIcon>OneDrive</NavRow>
          <NavRow><NavIcon><WpsCloud /></NavIcon>WPS网盘</NavRow>
          <NavGroup>
            <NavRow><NavIcon><PcIco /></NavIcon>此电脑</NavRow>
            {sidePc.map(([label, ic, sel]) => (
              <NavRow $child $selected={sel} key={label}><NavIcon>{ic}</NavIcon>{label}</NavRow>
            ))}
          </NavGroup>
          <NavRow><NavIcon><NetIco /></NavIcon>网络</NavRow>
          <NavRow><NavIcon><Penguin /></NavIcon>Linux</NavRow>
        </Sidebar>
        <Main>
          <HeaderRow>
            <HeaderCell $w={340} $pad={21}>名称<SortCaret><svg width="10" height="7" viewBox="0 0 10 7"><path d="M1 6l4-4 4 4" fill="none" stroke="#aaa" /></svg></SortCaret></HeaderCell>
            <HeaderCell $w={180} $pad={7}>修改日期</HeaderCell>
            <HeaderCell $w={150} $pad={7}>类型</HeaderCell>
            <HeaderCell $w={100} $pad={7}>大小</HeaderCell>
          </HeaderRow>
          <EmptyNote>此文件夹为空。</EmptyNote>
        </Main>
      </Body>

      <StatusBar>
        <StatusInfo>
          0 个项目
          <StatusCaret />
        </StatusInfo>
        <ViewToggles>
          <ViewToggle $active>
            <svg width="20" height="20" viewBox="0 0 20 20"><rect width="20" height="20" rx="2" fill="#c4c4c4" /><path d="M3 4h14M3 8h14M3 12h14M3 16h14" stroke="#222" /></svg>
          </ViewToggle>
          <ViewToggle>
            <svg width="20" height="20" viewBox="0 0 20 20"><rect width="20" height="20" rx="2" fill="#a8a8a8" /><rect x="3" y="2" width="14" height="12" fill="#fff" stroke="#111" /><path d="M3 17h14" stroke="#222" /></svg>
          </ViewToggle>
        </ViewToggles>
      </StatusBar>

      <Taskbar>
        <TaskItem>{TB.start}</TaskItem>
        <TaskItem>{TB.view}</TaskItem>
        <TaskItem $dot>{TB.ij}</TaskItem>
        <TaskItem $dot>{TB.keepass}</TaskItem>
        <TaskItem $dot>{TB.chrome}</TaskItem>
        <TaskItem $dot>{TB.photos}</TaskItem>
        <TaskDivider />
        <TaskItem $dot>{TB.moba}</TaskItem>
        <TaskItem $dot>{TB.baidu}</TaskItem>
        <TaskItem $dot>{TB.perf}</TaskItem>
        <TaskItem $dot $active>{TB.explorer}</TaskItem>
        <TaskItem $dot>{TB.bird}</TaskItem>
        <TaskItem $dot>{TB.circle}</TaskItem>
        <TaskItem $dot>{TB.pycharm}</TaskItem>
        <TaskItem $dot>{TB.typora}</TaskItem>
        <TaskItem $dot>{TB.wps}</TaskItem>
        <TaskItem $dot>{TB.ding}</TaskItem>
        <TaskItem $dot>{TB.wechat}</TaskItem>
        <TaskItem $dot>{TB.npp}</TaskItem>
        <TaskItem $dot>{TB.feather}</TaskItem>
        <TaskItem $dot>{TB.evernote}</TaskItem>
        <TaskItem $dot>{TB.frog}</TaskItem>
        <TaskItem $dot>{TB.term}</TaskItem>
        <TaskItem $dot>{TB.ps}</TaskItem>
        <TraySpacer />
        <TrayItem $w={30}><svg width="16" height="10" viewBox="0 0 16 10"><path d="M1 9l7-7 7 7" fill="none" stroke="#eee" strokeWidth="1.200" /></svg></TrayItem>
        <TrayItem $w={30}><svg width="18" height="18" viewBox="0 0 18 18"><rect x="3" y="1" width="15" height="11" fill="#fff" /><rect x="5" y="3" width="11" height="7" fill="#7ee07e" /><path d="M10.500 12v3M6 16h9" stroke="#eee" /><rect y="4" width="6" height="5" fill="#fff" /><path d="M1.500 4V2.500a1.500 1.500 0 0 1 3 0V4" stroke="#fff" fill="none" /></svg></TrayItem>
        <TrayItem $w={40}>中</TrayItem>
        <TrayItem $w={56}><svg width="20" height="20" viewBox="0 0 20 20"><rect x="1" y="1" width="18" height="18" rx="3" fill="#f04e23" transform="rotate(-8 10 10)" /><path d="M15 6H7c-2 0-2 4 0 4h6c2 0 2 4 0 4H5" fill="none" stroke="#fff" strokeWidth="2.200" /></svg></TrayItem>
        <TrayItem $w={38}><svg width="20" height="20" viewBox="0 0 20 20"><path d="M13 2H1v12h16v-3" fill="none" stroke="#eee" strokeWidth="1.200" /><path d="M8 14v4M4 18h9" stroke="#eee" strokeWidth="1.200" /><rect x="14.500" y="1" width="4" height="7" rx="1" fill="none" stroke="#eee" /></svg></TrayItem>
        <TrayItem $w={20}><svg width="20" height="14" viewBox="0 0 20 14"><path d="M1 5h3l4-4v12L4 9H1z" fill="none" stroke="#eee" /><path d="M12 4l6 6M18 4l-6 6" stroke="#eee" /></svg></TrayItem>
        <TrayItem $w={40}><svg width="20" height="16" viewBox="0 0 20 16"><rect x="6" y="3" width="13" height="11" rx="2" fill="#ddd" /><path d="M1 1v4M4 1v4M0 5h5v2c0 2-2 2-2 4" fill="none" stroke="#eee" /></svg></TrayItem>
        <Clock><ClockTime>10:32</ClockTime><ClockDate>2022/3/22</ClockDate></Clock>
      </Taskbar>

      <Watermark>CSDN @终回首</Watermark>

      <Menu $x={881} $y={291} $w={369} $pt={5} $pb={5} $pl={7} $z={1}>
        <MenuRow><MenuIcon><AmdIco /></MenuIcon><MenuLatin>AMD Radeon Software</MenuLatin></MenuRow>
        <MenuSep />
        <MenuRow><MenuIcon />查看(V)<MenuArrow><RightArrow color="#9db8d8" /></MenuArrow></MenuRow>
        <MenuRow><MenuIcon />排序方式(O)<MenuArrow><RightArrow color="#9db8d8" /></MenuArrow></MenuRow>
        <MenuRow><MenuIcon />分组依据(P)<MenuArrow><RightArrow color="#9db8d8" /></MenuArrow></MenuRow>
        <MenuRow><MenuIcon />刷新(E)</MenuRow>
        <MenuSep />
        <MenuRow><MenuIcon />自定义文件夹(F)...</MenuRow>
        <MenuSep />
        <MenuRow><MenuIcon><TermSmall /></MenuIcon>在 Windows 终端 中打开</MenuRow>
        <MenuRow><MenuIcon><MobaSmall /></MenuIcon><MenuLatin>Open MobaXterm terminal here</MenuLatin></MenuRow>
        <MenuRow $disabled><MenuIcon />粘贴(P)</MenuRow>
        <MenuRow><MenuIcon />撤消 重命名(U)<MenuShortcut>Ctrl+Z</MenuShortcut></MenuRow>
        <MenuSep />
        <MenuRow><MenuIcon />授予访问权限(G)<MenuArrow><RightArrow color="#9db8d8" /></MenuArrow></MenuRow>
        <MenuSep />
        <MenuRow $active><MenuIcon />新建(W)<MenuArrow><RightArrow /></MenuArrow></MenuRow>
        <MenuSep />
        <MenuRow><MenuIcon />属性(R)</MenuRow>
      </Menu>

      <Menu $x={1245} $y={240} $w={361} $pt={5} $pb={5} $pl={6} $z={2}>
        <MenuRow><MenuIcon><Folder w={16} h={13} /></MenuIcon>文件夹(F)</MenuRow>
        <MenuRow><MenuIcon><ShortcutIco /></MenuIcon>快捷方式(S)</MenuRow>
        <MenuSep />
        {subRows.map(([label, ic, active], i) => (
          <MenuRow $active={active} key={i}><MenuIcon>{ic}</MenuIcon>{label}</MenuRow>
        ))}
      </Menu>
    </Page>
  );
}
